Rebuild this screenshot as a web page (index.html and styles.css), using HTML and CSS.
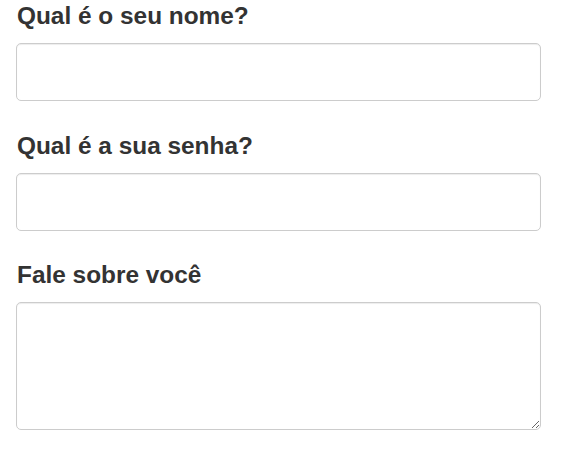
FILE: index.html
```html
<!DOCTYPE html>
<html lang="pt">
<head>
<meta charset="utf-8">
<title>Formulário</title>
<link rel="stylesheet" href="styles.css">
</head>
<body>
<form class="form">
  <div class="group">
    <label class="label" for="nome">Qual é o seu nome?</label>
    <input class="control" id="nome" type="text">
  </div>
  <div class="group">
    <label class="label" for="senha">Qual é a sua senha?</label>
    <input class="control" id="senha" type="password">
  </div>
  <div class="group">
    <label class="label" for="sobre">Fale sobre você</label>
    <textarea class="control area" id="sobre"></textarea>
  </div>
</form>
</body>
</html>
```

FILE: styles.css
```css
html, body {
  margin: 0;
  padding: 0;
  background: #fff;
}
body {
  font-family: "Liberation Sans", Arial, sans-serif;
  color: #333;
}
.form {
  display: flex;
  flex-direction: column;
  gap: 31.5px;
  padding: 3px 0 0 16px;
}
.group {
  display: flex;
  flex-direction: column;
  align-items: flex-start;
}
.label {
  font-size: 24.4px;
  line-height: 26px;
  font-weight: bold;
  margin: 0 0 14px 1px;
}
.control {
  box-sizing: border-box;
  width: 525px;
  height: 58px;
  margin: 0;
  padding: 6px 12px;
  border: 1px solid #ccc;
  border-radius: 5px;
  background: #fff;
  box-shadow: inset 0 1px 1px rgba(0, 0, 0, 0.075);
  font: 14px "Liberation Sans", Arial, sans-serif;
  color: #555;
  outline: none;
}
.area {
  height: 128px;
  resize: vertical;
}
```
